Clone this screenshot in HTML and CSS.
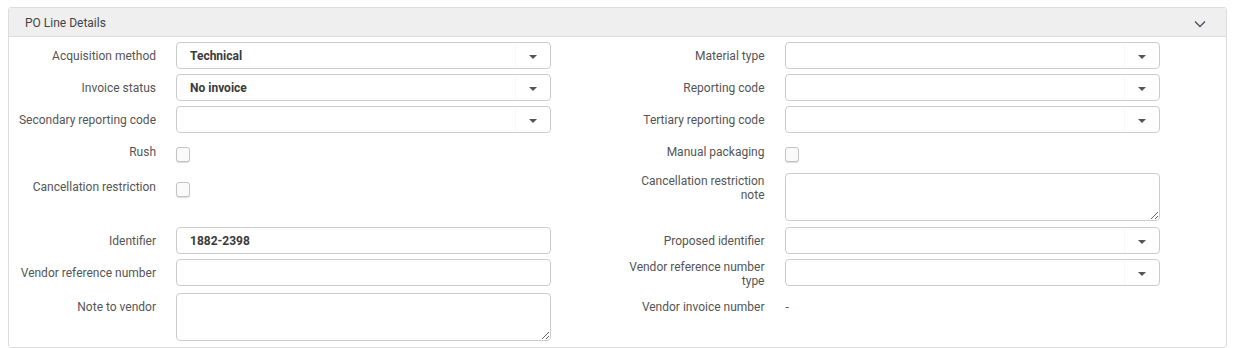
FILE: index.html
```html
<!DOCTYPE html>
<html lang="en">
<head>
    <meta charset="UTF-8">
    <meta name="viewport" content="width=device-width, initial-scale=1.0">
    <title>PO Line Details</title>
    <link rel="stylesheet" href="styles.css">
</head>
<body>
    <div class="panel">
        <div class="panel-header">
            <span>PO Line Details</span>
            <svg class="chevron" width="12" height="8" viewBox="0 0 12 8"><path d="M1 1.5 L6 6.5 L11 1.5" fill="none" stroke="#4a5562" stroke-width="1.4"/></svg>
        </div>
        <div class="panel-body">
            <div class="row">
                <div class="field">
                    <label>Acquisition method</label>
                    <div class="select"><span class="value">Technical</span><span class="caret"></span></div>
                </div>
                <div class="field">
                    <label>Material type</label>
                    <div class="select"><span class="value"></span><span class="caret"></span></div>
                </div>
            </div>
            <div class="row">
                <div class="field">
                    <label>Invoice status</label>
                    <div class="select"><span class="value">No invoice</span><span class="caret"></span></div>
                </div>
                <div class="field">
                    <label>Reporting code</label>
                    <div class="select"><span class="value"></span><span class="caret"></span></div>
                </div>
            </div>
            <div class="row">
                <div class="field">
                    <label>Secondary reporting code</label>
                    <div class="select"><span class="value"></span><span class="caret"></span></div>
                </div>
                <div class="field">
                    <label>Tertiary reporting code</label>
                    <div class="select"><span class="value"></span><span class="caret"></span></div>
                </div>
            </div>
            <div class="row check-row">
                <div class="field">
                    <label>Rush</label>
                    <div><span class="checkbox"></span></div>
                </div>
                <div class="field">
                    <label>Manual packaging</label>
                    <div><span class="checkbox"></span></div>
                </div>
            </div>
            <div class="row tall-row">
                <div class="field">
                    <label>Cancellation restriction</label>
                    <div><span class="checkbox"></span></div>
                </div>
                <div class="field">
                    <label>Cancellation restriction note</label>
                    <textarea class="textarea"></textarea>
                </div>
            </div>
            <div class="row">
                <div class="field">
                    <label>Identifier</label>
                    <input class="input" type="text" value="1882-2398">
                </div>
                <div class="field">
                    <label>Proposed identifier</label>
                    <div class="select"><span class="value"></span><span class="caret"></span></div>
                </div>
            </div>
            <div class="row">
                <div class="field">
                    <label>Vendor reference number</label>
                    <input class="input" type="text" value="">
                </div>
                <div class="field">
                    <label>Vendor reference number type</label>
                    <div class="select"><span class="value"></span><span class="caret"></span></div>
                </div>
            </div>
            <div class="row">
                <div class="field">
                    <label>Note to vendor</label>
                    <textarea class="textarea"></textarea>
                </div>
                <div class="field">
                    <label>Vendor invoice number</label>
                    <div class="plain">-</div>
                </div>
            </div>
        </div>
    </div>
</body>
</html>
```

FILE: styles.css
```css
body {
    font-family: Roboto, 'Liberation Sans', sans-serif;
    font-size: 12px;
    color: #555;
    margin: 0;
    background: #fff;
}
.panel {
    margin: 7px 11px 0 8px;
    border: 1px solid #ddd;
    border-radius: 3px;
    height: 341px;
    box-sizing: border-box;
}
.panel-header {
    height: 29px;
    background: #efefef;
    border-bottom: 1px solid #ddd;
    display: flex;
    align-items: center;
    justify-content: space-between;
    padding: 1px 20px 0 16px;
    box-sizing: border-box;
    color: #444;
    font-size: 12px;
}
.chevron {
    margin-top: 3px;
}
.panel-body {
    padding-top: 5px;
}
.row {
    display: grid;
    grid-template-columns: 1fr 1fr;
    margin-bottom: 5px;
}
.field {
    display: grid;
    grid-template-columns: 147px 375px;
    column-gap: 20px;
    align-items: start;
}
.field label {
    min-height: 27px;
    padding-top: 1px;
    box-sizing: border-box;
    display: flex;
    align-items: center;
    justify-content: flex-end;
    text-align: right;
    line-height: 14px;
    color: #555;
}
.select, .input {
    height: 27px;
    box-sizing: border-box;
    border: 1px solid #ccc;
    border-radius: 4px;
    background: #fff;
    display: flex;
    align-items: center;
    padding-top: 1px;
    font-family: inherit;
    font-size: 12px;
    font-weight: bold;
    color: #3a3a3a;
}
.select .value {
    flex: 1;
    padding-left: 13px;
}
.select .caret {
    width: 34px;
    height: 100%;
    border-left: 1px solid #f8f8f8;
    position: relative;
}
.select .caret::after {
    content: '';
    position: absolute;
    left: 13px;
    top: 11px;
    border-left: 4px solid transparent;
    border-right: 4px solid transparent;
    border-top: 4px solid #555;
}
.input {
    width: 100%;
    padding: 1px 13px 0;
    outline: none;
}
.textarea {
    width: 100%;
    height: 48px;
    box-sizing: border-box;
    border: 1px solid #ccc;
    border-radius: 4px;
    resize: vertical;
    margin: 0;
    font-family: inherit;
}
.checkbox {
    display: block;
    width: 14px;
    height: 15px;
    margin-top: 9px;
    border: 1px solid #c4c4c4;
    border-radius: 3px;
    background: #fafafa;
    box-shadow: 0 1px 1px rgba(0, 0, 0, 0.15);
    box-sizing: border-box;
}
.check-row {
    height: 30px;
}
.tall-row {
    margin-bottom: 6px;
}
.plain {
    line-height: 27px;
    padding-top: 1px;
    padding-left: 1px;
    color: #555;
}
```
